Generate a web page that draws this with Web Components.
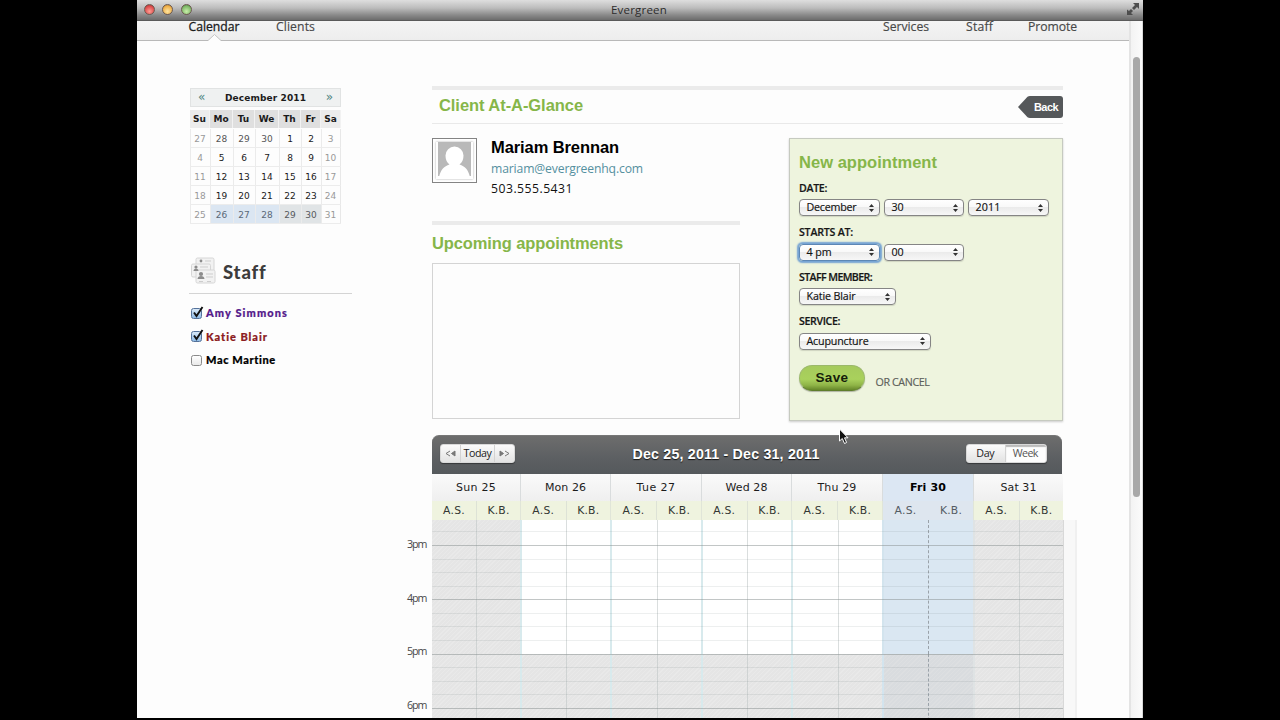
<!DOCTYPE html>
<html lang="en"><head><meta charset="utf-8"><title>Evergreen</title>
<style>html,body{margin:0;background:#000;overflow:hidden}body{height:720px;font-family:"Open Sans","Noto Sans",sans-serif}</style></head>
<body><ever-app></ever-app>
<script>
const define=(name,render,after)=>customElements.define(name,class extends HTMLElement{
  connectedCallback(){
    if(this.shadowRoot)return;
    this.attachShadow({mode:'open'}).innerHTML=render(this);
    if(after)after(this);
  }});

/* One-line label whose letter-spacing is tuned to fill the width in "w". */
define('fit-label',()=>`<style>:host{display:inline-block;white-space:nowrap;flex:none}span{display:inline-block}</style><span><slot></slot></span>`,el=>{
  const w=+el.getAttribute('w');if(!w)return;
  const n=el.textContent.length,s=el.shadowRoot.querySelector('span');
  const tune=()=>{
    s.style.letterSpacing='0';
    const real=s.getBoundingClientRect().width;
    if(real){s.style.letterSpacing=((w-real)/n).toFixed(3)+'px';el.style.width=w+'px'}
  };
  tune();requestAnimationFrame(tune);
});

define('window-bar',()=>`<style>
:host{display:grid;grid-template-columns:60px 1fr 60px;align-items:center;height:21px;box-sizing:border-box;border-bottom:1px solid #5a5a5a;background:linear-gradient(#dedede,#bcbcbc 40%,#8a8a8a 75%,#6c6c6c);font:11.5px/17px "Open Sans",sans-serif;color:#2c2c2c;text-align:center}
.n{margin-top:-2px;padding-right:2px}
.l{display:flex;gap:7.3px;padding-left:7px;margin-top:-2px}i{width:9px;height:9px;border-radius:50%;border:1px solid #6d5a50}
.r{background:radial-gradient(circle at 50% 70%,#ff9d93,#dc4b4b 65%,#8e2e2e)}.y{background:radial-gradient(circle at 50% 70%,#ffe5a0,#eeb04a 65%,#a66b24)}.g{background:radial-gradient(circle at 50% 70%,#c9eeaa,#7fb968 65%,#416f39)}
svg{margin-left:42px;display:block;margin-top:-2px}</style>
<div class="l"><i class="r"></i><i class="y"></i><i class="g"></i></div><div class="n"><fit-label w="56">Evergreen</fit-label></div>
<svg width="16" height="16" viewBox="0 0 16 16" fill="#4d4d4d"><path d="M8 2h6v6l-2-2-3 3-2-2 3-3zM2 14V8.5L4 10l2-2 2 2-2 2 2 2z"/></svg>`);

define('main-nav',()=>`<style>
:host{display:flex;position:relative;box-sizing:border-box;width:992px;height:20px;border-bottom:1px solid #b9b9b9;background:linear-gradient(#f4f4f4,#ededed);font:12.2px/12px "Open Sans",sans-serif;color:#484848;padding:0 52px 0 51.5px;-webkit-text-stroke:.15px}
.a{color:#1c1c1c;-webkit-text-stroke:.3px}.c{margin-left:36.5px}.s{margin-left:auto;display:flex}
svg{position:absolute;left:71px;top:13px}</style>
<fit-label class="a" w="51">Calendar</fit-label><fit-label class="c" w="39">Clients</fit-label>
<div class="s"><fit-label w="46">Services</fit-label><fit-label w="27" style="margin-left:37px">Staff</fit-label><fit-label w="49" style="margin-left:35px">Promote</fit-label></div>
<svg width="13" height="8"><path d="M0 6.5L6.5 .5L13 6.5V8H0z" fill="#fdfdfd"/><path d="M0 6.5L6.5 .5L13 6.5" fill="none" stroke="#c4c4c4"/></svg>`);

define('mini-month',()=>{
  const rows=[[27,28,29,30,1,2,3],[4,5,6,7,8,9,10],[11,12,13,14,15,16,17],[18,19,20,21,22,23,24],[25,26,27,28,29,30,31]];
  const cell=(d,r,c)=>`<span class="${c%6==0?'we':r==4?(c<4?'cur':'cur g'):r==0&&c<4?'out':''}">${d}</span>`;
  return `<style>
:host{display:block;width:151px;font:9px/18px "DejaVu Sans",sans-serif;color:#1a1a1a;text-align:center}
.h{display:flex;justify-content:space-between;align-items:center;height:17px;border:1px solid #e1e3e3;background:#eff1f1;padding:0 7px;font-weight:bold;color:#1b1b1b}
.h b{font-weight:normal;font-size:12px;line-height:15px;color:#4e8580}
.g7{display:grid;grid-template-columns:20px 23px 22px 24px 22px 20px 20px;grid-template-rows:18px;grid-auto-rows:18px;gap:1px 0;border:solid #ececec;border-width:0 0 1px 0;margin-top:3px}
.g7 span{box-sizing:border-box;border-left:1px solid #ebebeb;box-shadow:0 1px 0 #ececec;line-height:20px;padding-right:1px}
.g7 em{font-style:normal;font-weight:bold;background:#dfdfdf;border-right:1px solid #f2f2f2;line-height:19px}
.g7 em.x{background:#ececec}.g7 span:nth-child(7n){border-right:1px solid #e8e8e8}
.g7 .we{color:#999}.g7 .out{color:#555}.g7 .cur{background:#dbe6f2;color:#5a6877}.g7 .cur.g{background:#e0e4e6;color:#55595c}</style>
<div class="h"><b>«</b><fit-label w="81">December 2011</fit-label><b>»</b></div>
<div class="g7">${['Su','Mo','Tu','We','Th','Fr','Sa'].map((d,i)=>`<em class="${i%6?'':'x'}">${d}</em>`).join('')}${rows.map((r,i)=>r.map((d,c)=>cell(d,i,c)).join('')).join('')}</div>`});

define('staff-check',el=>`<style>
:host{display:flex;align-items:center;height:23.6px;gap:4px;font:900 11px/20px Lato,sans-serif;-webkit-text-stroke:.2px}
i{box-sizing:border-box;width:11px;height:11px;border:1px solid #8a8a8a;border-radius:2.5px;background:linear-gradient(#fff,#e9e9e9);position:relative;margin-left:1px}
:host([on]) i{border-color:#54729b;background:linear-gradient(#d9e9f8,#8fbbe6)}
svg{position:absolute;left:0;top:-3px;display:none}:host([on]) svg{display:block}</style>
<i><svg width="12" height="13"><path d="M2 6.5L4.5 10L10.5 1" fill="none" stroke="#111" stroke-width="1.9"/></svg></i><slot></slot>`);

define('side-bar',()=>`<style>
:host{display:block;width:163px;padding-left:52px;padding-top:47px}
mini-month{margin-left:1px}
.t{display:flex;align-items:center;height:43px;margin-top:26px;border-bottom:1px solid #d4d4d4;font:900 18.5px/24px Lato,sans-serif;color:#3c3c3c;padding-left:2px;gap:6px}
.k{padding:7.5px 0 0 1px}</style>
<mini-month></mini-month>
<div class="t"><svg width="26" height="28" viewBox="0 0 26 28" style="margin-top:-2px"><g fill="#f2f2f2" stroke="#d6d6d6"><rect x="5" y="1" width="18" height="13" rx="1.5"/><rect x=".5" y="7" width="19" height="13" rx="1.5"/><rect x="5" y="13" width="19" height="13" rx="1.5"/></g><g fill="#8c8c8c"><circle cx="10" cy="4" r="1.4"/><circle cx="5" cy="10" r="1.6"/><path d="M2.500 14c0-3.500 5-3.500 5 0z"/><circle cx="10" cy="17" r="2.1"/><path d="M6.500 22c0-4 7-4 7 0z"/></g><path d="M14 4h6M9 10h8M15 17h7M15 20h7M8 24.500h4M16 24.500h4" stroke="#cdcdcd"/></svg><fit-label w="43">Staff</fit-label></div>
<div class="k"><staff-check on><fit-label w="82" style="color:#551a8b">Amy Simmons</fit-label></staff-check><staff-check on><fit-label w="62" style="color:#8c1c22">Katie Blair</fit-label></staff-check><staff-check><fit-label w="70" style="color:#000">Mac Martine</fit-label></staff-check></div>`);

define('back-button',()=>`<style>:host{display:grid;width:45px;height:22px;font:bold 11px/22px "Liberation Sans",sans-serif;color:#fff}svg,div{grid-area:1/1}div{padding-left:16px}</style>
<svg width="45" height="22"><path d="M0 11L9.5 .8Q10.5 0 12 0H42Q45 0 45 3V19Q45 22 42 22H12Q10.5 22 9.5 21.2z" fill="#55585a"/></svg><div><fit-label w="24">Back</fit-label></div>`);

define('client-card',()=>`<style>
:host{display:block;width:308px}
.p{display:flex;height:45px;gap:14px}
.f{box-sizing:border-box;width:45px;height:45px;border:1px solid #848484;padding:3px;background:#fff;flex:none}
.f svg{display:block;box-shadow:0 0 2px #aaa}
.n{font:bold 16.5px/18px "Liberation Sans",sans-serif;color:#000}.e{font:12.2px/20px "Open Sans",sans-serif;color:#55909f}.ph{font:12.2px/20px "Open Sans",sans-serif;color:#111}
.b{height:4px;background:#ebebeb;margin-top:38px}
h2{margin:7px 0 0;font:bold 16.5px/22px "Liberation Sans",sans-serif;color:#86b649}
.box{box-sizing:border-box;height:156px;border:1px solid #d4d4d4;margin-top:9px}.n{height:21px}.e,.ph{height:20px}</style>
<div class="p"><div class="f"><svg width="37" height="37"><rect width="37" height="37" fill="#fff"/><rect x="2" y="0" width="33" height="34" fill="#b9b9b9"/><path d="M3 35C5 27 8 24.500 13.500 22.500C10.800 20.500 9.500 17.500 9.500 13.500A9 9 0 0 1 27.500 13.500C27.500 17.500 26.200 20.500 23.500 22.500C29 24.500 32 27 34 35z" fill="#fff"/></svg></div>
<div><div class="n"><fit-label w="128">Mariam Brennan</fit-label></div><div class="e"><fit-label w="152">mariam@evergreenhq.com</fit-label></div><div class="ph"><fit-label w="82">503.555.5431</fit-label></div></div></div>
<div class="b"></div><h2><fit-label w="191">Upcoming appointments</fit-label></h2><div class="box"></div>`);

define('pop-select',()=>`<style>
:host{box-sizing:border-box;display:flex;justify-content:space-between;align-items:center;height:17px;border:1px solid #858585;border-radius:4px;background:linear-gradient(#fff 0,#f9f9f9 45%,#ebebeb 50%,#f7f7f7);padding:0 5px 0 6.5px;font:10.7px/15px "Open Sans",sans-serif;color:#111;-webkit-text-stroke:.15px;box-shadow:0 1px 1px #0002}
:host([focus]){border-color:#5d87b5;box-shadow:0 0 1.5px 1.5px #75a3d3}</style><slot></slot><svg width="5" height="8"><path d="M2.500 0L5 3H0zM0 5H5L2.500 8z" fill="#333"/></svg>`);

define('appointment-form',()=>`<style>
:host{box-sizing:border-box;display:block;width:274px;height:283px;border:1px solid #c6cac0;background:#eef4de;padding:12px 9px;box-shadow:0 1px 2px #0003}
h2{margin:0;font:bold 16.5px/22px "Liberation Sans",sans-serif;color:#86b649}
.l{font:600 10.6px/16px "Open Sans",sans-serif;color:#161616;height:16px;-webkit-text-stroke:.2px}
.r{display:flex;gap:4px;margin:3.500px 0 8px;height:17px}
.x{display:flex;margin-top:15px}
.s{width:66px;height:26px;border-radius:13px;box-sizing:border-box;background:linear-gradient(#a5ca5c,#a9d15c 55%,#8fb447 80%,#658729);border:1px solid #9bb86a;border-bottom-color:#5f7d2c;box-shadow:0 1px 1px #0004;text-align:center;font:bold 13.5px/24px "Liberation Sans",sans-serif;color:#151d0a}
.c{font:10.700px/16px "Open Sans",sans-serif;color:#5c605a;-webkit-text-stroke:.15px;margin:9px 0 0 10.500px}</style>
<h2><fit-label w="138">New appointment</fit-label></h2>
<div class="l" style="margin-top:6.500px"><fit-label w="28">DATE:</fit-label></div><div class="r"><pop-select style="width:81px"><fit-label w="50">December</fit-label></pop-select><pop-select style="width:80px"><fit-label w="12">30</fit-label></pop-select><pop-select style="width:81px"><fit-label w="25">2011</fit-label></pop-select></div>
<div class="l"><fit-label w="54">STARTS AT:</fit-label></div><div class="r"><pop-select focus style="width:81px"><fit-label w="25">4 pm</fit-label></pop-select><pop-select style="width:80px"><fit-label w="12">00</fit-label></pop-select></div>
<div class="l"><fit-label w="73">STAFF MEMBER:</fit-label></div><div class="r"><pop-select style="width:97px"><fit-label w="49">Katie Blair</fit-label></pop-select></div>
<div class="l"><fit-label w="41">SERVICE:</fit-label></div><div class="r"><pop-select style="width:132px"><fit-label w="62">Acupuncture</fit-label></pop-select></div>
<div class="x"><div class="s"><fit-label w="33">Save</fit-label></div><div class="c"><fit-label w="54">OR CANCEL</fit-label></div></div>`);

define('calendar-toolbar',()=>`<style>
:host{box-sizing:border-box;display:grid;grid-template-columns:85px 1fr 85px;justify-content:space-between;align-items:center;height:39px;width:630px;border-radius:7px 7px 0 0;background:linear-gradient(#6d6d6d,#5c5f62 60%,#55595c);padding:0 15px 3px 8px;border-top:1px solid #777}
.s{display:flex;height:19px;width:75px;box-sizing:border-box;border-radius:3px;border:1px solid #d9d9d9;background:linear-gradient(#fbfbfb,#e3e3e3);font:10.700px/17px "Open Sans",sans-serif;color:#222;text-align:center;box-shadow:0 1px 1px #0006;overflow:hidden}
.s div{border-right:1px solid #d3d3d3}.s div:last-child{border:0}.n{width:19px}.m{flex:1}
.w{width:81px;margin-left:auto}.w div{flex:1;padding-right:1px}.w div:last-child{background:#fdfdfd;box-shadow:inset 0 2px 1px #bbb;flex:1.080;color:#555}
h1{margin:0;text-align:center;font:bold 14.200px/20px "Liberation Sans",sans-serif;color:#fff;text-shadow:0 1px 1px #111;padding-right:35px}
svg{vertical-align:middle;margin-top:-2px}</style>
<div class="s"><div class="n"><svg width="11" height="7" stroke="#777" fill="none"><path d="M5 1L1 3.500L5 6"/><path d="M10 1L6.500 3.500L10 6z" fill="#777"/></svg></div><div class="m"><fit-label w="28">Today</fit-label></div><div class="n"><svg width="11" height="7" stroke="#777" fill="none"><path d="M6 1L10 3.500L6 6"/><path d="M1 1L4.500 3.500L1 6z" fill="#777"/></svg></div></div>
<h1><fit-label w="187">Dec 25, 2011 - Dec 31, 2011</fit-label></h1>
<div class="s w"><div><fit-label w="18">Day</fit-label></div><div><fit-label w="25">Week</fit-label></div></div>`);

define('day-column',el=>`<style>
:host{display:flex;flex-direction:column;min-width:0;font:11px/20px "DejaVu Sans",sans-serif;color:#1c1c1c;text-align:center}
.h{box-sizing:border-box;height:27px;line-height:27px;border-left:1px solid #d9dcdd;background:linear-gradient(#fafafa,#efefef)}
.i{display:grid;grid-template-columns:1fr 1fr;height:19px;background:#eff3df;font-size:10.800px;line-height:19px;color:#333733;border-left:1px solid #e0e5d8;box-sizing:border-box}
.i div+div{border-left:1px solid #dde2d6}
.b{flex:1;display:grid;grid-template-columns:1fr 1fr;grid-template-rows:134px 1fr;border-left:2px solid #d8eaed;--hatch:repeating-linear-gradient(135deg,#e5e5e5 0 2px,#e9e9e9 2px 3px)}
.b div{background:#fff}.b div:nth-child(n+3){background:var(--hatch)}
.b div:nth-child(even){border-left:1px solid #dadede}
:host([off]) .b div{background:var(--hatch)}:host([off]) .b div:nth-child(even),.b div:nth-child(4){border-left-color:#cfd3d3}:host([off]) .b{border-left-color:#dfe3e4}
:host([first]) .b,:host([first]) .h,:host([first]) .i{border-left-width:0}
:host([today]) .h{background:#dce7f3;font-weight:bold;color:#000}
:host([today]) .i{background:#dee6ef;color:#555c64}:host([today]) .i div{border-color:#dee6ef}
:host([today]) .b{border-left-color:#d3e4ee}
:host([today]) .b div{background:#dae7f2}:host([today]) .b div:nth-child(n+3){background:repeating-linear-gradient(135deg,#d9dcdf 0 2px,#dddfe1 2px 3px)}
:host([today]) .b div:nth-child(even){border-left:1px dashed #9aa2a9}
:host([today]) .b div:nth-child(odd){margin-right:1px;box-shadow:1px 0 #dae7f2}:host([today]) .b div:nth-child(even){margin-left:-1px}</style>
<div class="h"><fit-label w="${el.getAttribute('w')}">${el.getAttribute('day')}</fit-label></div><div class="i"><div><fit-label w="22">A.S.</fit-label></div><div><fit-label w="22">K.B.</fit-label></div></div><div class="b"><div></div><div></div><div></div><div></div></div>`);

define('week-grid',()=>{
 const ys=[531,545,559,572,586,599,613,626,640,654,667,681,694,708];let p=520;
 const rows=ys.map((y,i)=>{const h=y+1-p;p=y+1;return `<i class="${i%4==1?'hr':''}" style="height:${h}px"></i>`}).join('');
 return `<style>
:host{display:grid;position:relative;grid-template-columns:32px 88px 90px 91px 90px 91px 91px 90px 14px;height:244px;margin-left:-32px}
.t{padding-top:62px;font:10.700px/16px "Open Sans",sans-serif;color:#484848}.t div{height:53.500px;padding-left:7px}
.o{position:absolute;left:32px;top:46px;width:631px}
.o i{display:block;box-sizing:border-box;border-bottom:1px solid #5f6b6b1c}.o i.hr{border-color:#858d8d80}
.e{margin-top:46px;background:#f8f8f8;border-left:1px solid #d8d8d8;border-right:2px solid #f0f0f0;box-sizing:border-box}</style>
<div class="t">${['3pm','4pm','5pm','6pm'].map(t=>`<div><fit-label w="19.5">${t}</fit-label></div>`).join('')}</div>
<day-column first off day="Sun 25" w="40"></day-column><day-column day="Mon 26" w="41"></day-column><day-column day="Tue 27" w="39"></day-column><day-column day="Wed 28" w="42"></day-column><day-column day="Thu 29" w="39"></day-column><day-column today day="Fri 30" w="36"></day-column><day-column off day="Sat 31" w="36"></day-column>
<div class="e"></div><div class="o">${rows}</div>`});

define('main-area',()=>`<style>
:host{display:block;width:631px;margin-left:80px;padding-top:45px}
.b{height:4px;background:#ebebeb}
.h{display:flex;justify-content:space-between;align-items:center;height:33px;border-bottom:1px solid #e9e9e9;padding-left:7px}
h2{margin:-4px 0 0;font:bold 16.500px/22px "Liberation Sans",sans-serif;color:#86b649}
.c{display:flex;justify-content:space-between;height:283px;margin:14px 0}
</style><div class="b"></div><div class="h"><h2><fit-label w="144">Client At-A-Glance</fit-label></h2><back-button></back-button></div>
<div class="c"><client-card></client-card><appointment-form></appointment-form></div>
<calendar-toolbar></calendar-toolbar><week-grid></week-grid>`);

define('ever-app',()=>`<style>
:host{display:block;position:relative;width:1006px;height:718px;margin-left:137px;background:#fdfdfd;overflow:hidden}
.v{display:grid;grid-template-columns:992px 14px;height:697px}.p{height:697px}
.m{display:flex;align-items:flex-start}
.s{box-sizing:border-box;border-left:2px solid #e4e4e4;background:linear-gradient(90deg,#f3f3f3,#fbfbfb);padding:36px 0 0 2px;border-right:1px solid #d9d9d9}
.s div{width:7px;height:440px;border-radius:4px;background:#a9a9a9}
.cur{position:absolute;left:701px;top:428px}</style>
<window-bar></window-bar><div class="v"><div class="p"><main-nav></main-nav><div class="m"><side-bar></side-bar><main-area></main-area></div></div><div class="s"><div></div></div></div>
<svg class="cur" width="12" height="17"><path d="M1.500 1V13L4.300 10.500L6.500 15.500L8.600 14.500L6.500 9.800H10z" fill="#111" stroke="#fff"/></svg>`);
</script></body></html>
